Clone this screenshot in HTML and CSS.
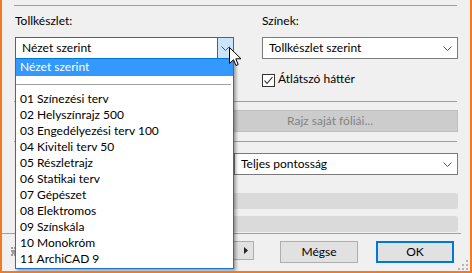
FILE: index.html
```html
<!DOCTYPE html>
<html>
  <head>
    <meta charset="utf-8">
    <meta name="viewport" content="width=device-width, initial-scale=1" />
    <link rel="stylesheet" href="styles.css">
  </head>

  <body>
    <div class="dialog">
      <div class="sep sep-top"></div>

      <div class="cols">
        <div class="col">
          <div class="label">Tollkészlet:</div>
          <div class="combo combo-open">
            <span class="combo-text">Nézet szerint</span>
            <span class="combo-btn">
              <svg width="9" height="5" viewBox="0 0 9 5"><polyline points="0.5,0.5 4.5,4.5 8.5,0.5" fill="none" stroke="#555" stroke-width="1"/></svg>
            </span>
          </div>
        </div>

        <div class="col">
          <div class="label">Színek:</div>
          <div class="combo">
            <span class="combo-text">Tollkészlet szerint</span>
            <svg class="chev" width="9" height="5" viewBox="0 0 9 5"><polyline points="0.5,0.5 4.5,4.5 8.5,0.5" fill="none" stroke="#555" stroke-width="1"/></svg>
          </div>
          <div class="check">
            <span class="check-box">
              <svg width="11" height="11" viewBox="0 0 11 11"><polyline points="1.5,5.5 4,8.5 9.5,2" fill="none" stroke="#222" stroke-width="1.1"/></svg>
            </span>
            <span class="check-text">Átlátszó háttér</span>
          </div>
        </div>
      </div>

      <div class="sep sep-mid"></div>
      <div class="row-right">
        <div class="btn btn-disabled btn-layers">Rajz saját fóliái...</div>
      </div>

      <div class="sep sep-mid2"></div>
      <div class="row-right">
        <div class="combo combo-wide">
          <span class="combo-text">Teljes pontosság</span>
          <svg class="chev" width="9" height="5" viewBox="0 0 9 5"><polyline points="0.5,0.5 4.5,4.5 8.5,0.5" fill="none" stroke="#555" stroke-width="1"/></svg>
        </div>
      </div>

      <div class="bar bar1"></div>
      <div class="bar bar2"></div>

      <div class="footer">
        <svg class="tiny-icon" width="6" height="10" viewBox="0 0 6 10">
          <path d="M0 1h2M3 1h2M0 4h5M1 6h3M0 8h2M3 8h2" stroke="#444" stroke-width="1" fill="none"/>
        </svg>
        <div class="mini">
          <svg width="4" height="7" viewBox="0 0 4 7"><polygon points="0,0 4,3.5 0,7" fill="#222"/></svg>
        </div>
        <div class="btn btn-cancel">Mégse</div>
        <div class="btn btn-default">OK</div>
      </div>

      <svg class="grip" width="12" height="12" viewBox="0 0 12 12">
        <g fill="#b4b4b4">
          <rect x="9" y="1" width="2" height="2"/>
          <rect x="5" y="5" width="2" height="2"/>
          <rect x="9" y="5" width="2" height="2"/>
          <rect x="1" y="9" width="2" height="2"/>
          <rect x="5" y="9" width="2" height="2"/>
          <rect x="9" y="9" width="2" height="2"/>
        </g>
      </svg>

      <!-- open dropdown of the first combo -->
      <ul class="droplist">
        <li class="selected">Nézet szerint</li>
        <li class="divider"><span></span></li>
        <li>01 Színezési terv</li>
        <li>02 Helyszínrajz 500</li>
        <li>03 Engedélyezési terv 100</li>
        <li>04 Kiviteli terv 50</li>
        <li>05 Részletrajz</li>
        <li>06 Statikai terv</li>
        <li>07 Gépészet</li>
        <li>08 Elektromos</li>
        <li>09 Színskála</li>
        <li>10 Monokróm</li>
        <li>11 ArchiCAD 9</li>
      </ul>

      <svg class="cursor" width="13" height="20" viewBox="0 0 13 20">
        <path d="M0.5 0.5 L0.5 16.5 L4.5 12.7 L7 18.5 L9.2 17.5 L6.8 11.8 L12 11.8 Z" fill="#fff" stroke="#000" stroke-width="1" stroke-linejoin="miter"/>
      </svg>
    </div>
  </body>
</html>
```

FILE: styles.css
```css
  * {
    box-sizing: border-box;
  }

  body {
    margin: 0;
    font-family: Lato, "Noto Sans", sans-serif;
    font-size: 12px;
    color: #000;
    background-color: #f0f0f0;
  }

  .dialog {
    position: relative;
    width: 472px;
    height: 273px;
    padding: 0 12px 0 13px;
    border: 2px solid #f47a22;
    border-top: none;
    background-color: #f0f0f0;
    overflow: hidden;
  }

  .sep {
    height: 1px;
    background-color: #a0a0a0;
    margin-left: -1px;
    margin-right: 1px;
  }

  .sep-top {
    margin-top: 5px;
  }

  .sep-mid {
    margin-top: 14px;
  }

  .sep-mid2 {
    margin-top: 9px;
  }

  .cols {
    display: grid;
    grid-template-columns: 219px 196px;
    column-gap: 28px;
    align-items: start;
  }

  .label {
    height: 16px;
    line-height: 16px;
    margin-top: 7px;
  }

  .combo {
    display: flex;
    align-items: center;
    height: 22px;
    margin-top: 8px;
    background-color: #fff;
    border: 1px solid #7a7a7a;
  }

  .combo-text {
    flex: 1;
    line-height: 20px;
    padding-left: 6px;
    white-space: nowrap;
  }

  .chev {
    margin-right: 5px;
  }

  .combo-open {
    border-color: #0078d7;
  }

  .combo-btn {
    display: flex;
    align-items: center;
    justify-content: center;
    width: 16px;
    height: 20px;
    background-color: #cce4f7;
    border-left: 1px solid #0078d7;
  }

  .check {
    display: flex;
    align-items: flex-start;
    margin-top: 12px;
  }

  .check-box {
    display: flex;
    width: 13px;
    height: 13px;
    margin-top: 3px;
    background-color: #fff;
    border: 1px solid #333;
  }

  .check-text {
    line-height: 16px;
    margin-left: 3px;
  }

  .row-right {
    display: flex;
    justify-content: flex-end;
  }

  .btn {
    display: flex;
    align-items: center;
    justify-content: center;
    height: 22px;
    line-height: 18px;
    padding-bottom: 1px;
    background-color: #e1e1e1;
    border: 1px solid #adadad;
  }

  .btn-layers {
    width: 256px;
    margin-top: 8px;
  }

  .btn-disabled {
    background-color: #cccccc;
    border-color: #bfbfbf;
    color: #838383;
  }

  .combo-wide {
    width: 224px;
    margin-top: 11px;
  }

  .combo-wide .combo-text {
    padding-left: 6px;
  }

  .bar {
    height: 16px;
    border-radius: 3px;
    background-color: #dadada;
  }

  .bar1 {
    margin-top: 18px;
  }

  .bar2 {
    margin-top: 7px;
  }

  .footer {
    display: flex;
    align-items: flex-start;
    height: 38px;
    margin-top: 1px;
    margin-left: -13px;
    margin-right: -3px;
    padding: 7px 0 0 9px;
    border-top: 1px solid #a0a0a0;
  }

  .tiny-icon {
    margin-top: 6px;
  }

  .mini {
    display: flex;
    align-items: center;
    justify-content: flex-end;
    width: 40px;
    height: 19px;
    margin-left: 197px;
    padding-right: 5px;
    background-color: #e1e1e1;
    border: 1px solid #adadad;
  }

  .btn-cancel {
    width: 78px;
    margin-left: 26px;
  }

  .btn-default {
    width: 78px;
    margin-left: 18px;
    border: 2px solid #0078d7;
  }

  .grip {
    position: absolute;
    right: 1px;
    bottom: 0;
  }

  .droplist {
    position: absolute;
    left: 13px;
    top: 59px;
    width: 219px;
    margin: 0;
    padding: 0;
    list-style: none;
    background-color: #fff;
    border: 1px solid #1a73d0;
    border-top: none;
    box-shadow: 2px 2px 3px rgba(0, 0, 0, 0.35);
  }

  .droplist li {
    height: 16px;
    line-height: 14px;
    padding: 0 0 2px 4px;
    white-space: nowrap;
  }

  .droplist li.selected {
    height: 17px;
    line-height: 15px;
    background-color: #3399ff;
    color: #fff;
  }

  .droplist li.divider {
    display: flex;
    align-items: center;
    padding: 0 2px 0 0;
  }

  .droplist li.divider span {
    flex: 1;
    height: 1px;
    background-color: #a0a0a0;
  }

  .cursor {
    position: absolute;
    left: 227px;
    top: 47px;
  }
```
